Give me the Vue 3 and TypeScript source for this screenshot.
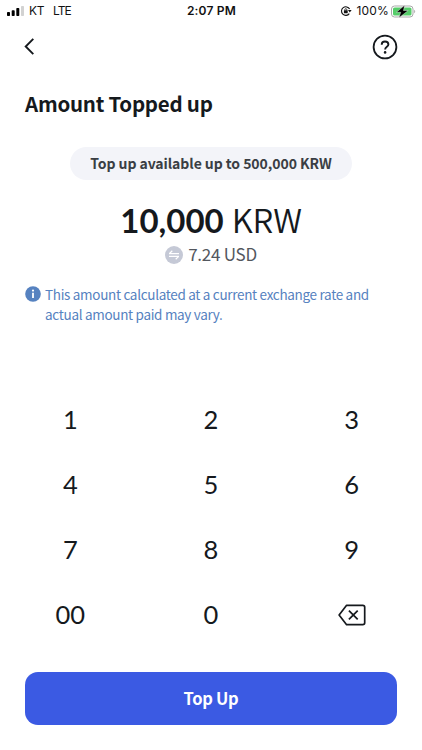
<script setup lang="ts">
import { ref } from 'vue'

const keys: string[] = ['1', '2', '3', '4', '5', '6', '7', '8', '9', '00', '0', 'del']
const amount = ref<number>(10000)
const limit = 500000
const rate = 0.000724

function format(value: number): string {
  return value.toLocaleString('en-US')
}

function press(key: string): void {
  if (key === 'del') {
    amount.value = Math.floor(amount.value / 10)
    return
  }
  const next = Number(`${amount.value}${key}`)
  if (next <= limit) amount.value = next
}
</script>

<template>
  <main class="screen">
    <div class="status">
      <div class="carrier">
        <svg class="signal" width="17" height="10" viewBox="0 0 17 10">
          <rect x="0" y="6" width="3" height="4" rx="0.8" />
          <rect x="4.7" y="4.2" width="3" height="5.8" rx="0.8" />
          <rect x="9.3" y="2" width="3" height="8" rx="0.8" />
          <rect x="14" y="0" width="3" height="10" rx="0.8" fill="#d2d2d2" />
        </svg>
        <span class="operator">KT</span>
        <span class="network">LTE</span>
      </div>
      <div class="clock">2:07 PM</div>
      <div class="power">
        <svg width="12" height="12" viewBox="0 0 12 12" fill="none" stroke="#111">
          <path d="M9.3 8.6A4.3 4.3 0 1 1 9.6 4.1" stroke-width="1.1" />
          <path d="M8 5.100h3.600L9.8 7.4z" fill="#111" stroke="none" />
          <rect x="3.900" y="5.3" width="3.8" height="3" rx="0.4" fill="#111" stroke="none" />
          <path d="M4.8 5.5V4.7a1 1 0 0 1 2 0v.8" stroke-width="0.8" />
        </svg>
        <span class="percent">100%</span>
        <svg class="battery" width="25" height="13" viewBox="0 0 25 13">
          <rect x="0.5" y="1" width="21.5" height="11" rx="3" fill="#fff" stroke="#a9a9a9" />
          <rect x="2" y="2.5" width="18.5" height="8" rx="1.6" fill="#55cd69" />
          <path d="M23.2 4.8c1.3.5 1.3 2.9 0 3.4z" fill="#a9a9a9" />
          <path d="M13.6.3 5.400 7.300h4.300l-1.700 5.500L17.200 5.500h-4.700z" fill="#000" stroke="#fff" stroke-width="0.4" />
        </svg>
      </div>
    </div>

    <header class="nav">
      <button class="icon" aria-label="Back">
        <svg width="12" height="18" viewBox="0 0 12 18" fill="none" stroke="#15191d" stroke-width="1.9">
          <path d="M10.300 .900 2.700 8.500l7.600 7.600" />
        </svg>
      </button>
      <button class="icon" aria-label="Help">
        <svg width="26" height="26" viewBox="0 0 26 26" fill="none" stroke="#15191d">
          <circle cx="13" cy="13" r="11.4" stroke-width="1.8" />
          <path d="M9.7 10.7c0-1.9 1.3-3.2 3.3-3.2s3.4 1.2 3.4 2.9c0 2.3-3.3 2.3-3.3 5" stroke-width="1.9" />
          <circle cx="13.1" cy="18.4" r="1.3" fill="#15191d" stroke="none" />
        </svg>
      </button>
    </header>

    <h1 class="title">Amount Topped up</h1>
    <div class="limit"><span>Top up available up to {{ format(limit) }} KRW</span></div>
    <div class="amount"><strong>{{ format(amount) }}</strong><span class="currency">KRW</span></div>
    <div class="converted">
      <svg width="18" height="18" viewBox="0 0 18 18">
        <circle cx="9" cy="9" r="9" fill="#c5c9d6" />
        <path d="M4 7.7h10M4 10.4h10M4.500 7.500l2.800-2.700M13.500 10.600l-2.800 2.700" fill="none" stroke="#fff" stroke-width="1.2" />
      </svg>
      <span>{{ (amount * rate).toFixed(2) }} USD</span>
    </div>
    <div class="note">
      <svg width="16" height="16" viewBox="0 0 16 16">
        <circle cx="8" cy="8" r="7.8" fill="#5682c0" />
        <circle cx="8" cy="4.6" r="1.1" fill="#fff" />
        <path d="M8 6.8v5.3" stroke="#fff" stroke-width="1.8" />
      </svg>
      <p>This amount calculated at a current exchange rate and<br />actual amount paid may vary.</p>
    </div>

    <div class="keypad">
      <button v-for="key in keys" :key="key" class="key" @click="press(key)">
        <svg v-if="key === 'del'" width="28" height="22" viewBox="0 0 28 22" fill="none" stroke="#15191d" stroke-width="1.7" stroke-linejoin="round">
          <path d="M8.600 1.300h16.200c1.200 0 1.900.7 1.900 1.900v15.600c0 1.200-.7 1.900-1.900 1.900H8.600L1.100 11z" />
          <path d="m10.900 6.600 8.800 8.800M19.700 6.600l-8.800 8.800" />
        </svg>
        <span v-else>{{ key }}</span>
      </button>
    </div>

    <button class="submit"><span>Top Up</span></button>
  </main>
</template>

<style>
body {
  background: #fff;
}
</style>

<style scoped>
.screen {
  box-sizing: border-box;
  width: 100%;
  height: 750px;
  display: flex;
  flex-direction: column;
  overflow: hidden;
  color: #15191d;
  background: #fff;
  font-family: 'Noto Sans CJK KR', sans-serif;
}
button {
  padding: 0;
  border: 0;
  background: none;
  color: inherit;
  font: inherit;
}
svg {
  display: block;
  flex: none;
}
.status {
  height: 22px;
  padding: 0 6px 0 7px;
  display: grid;
  grid-template-columns: 1fr auto 1fr;
  align-items: center;
  font: 12px/22px Inter, sans-serif;
  color: #111;
}
.carrier,
.power {
  display: flex;
  align-items: center;
}
.power {
  justify-content: flex-end;
}
.signal {
  margin-right: 5px;
}
.operator {
  letter-spacing: -0.4px;
}
.network {
  margin-left: 9px;
  letter-spacing: -0.9px;
}
.clock {
  font-weight: 600;
  letter-spacing: 0.2px;
}
.percent {
  margin: 0 2px 0 4px;
  letter-spacing: 0.2px;
}
.nav {
  height: 50px;
  padding: 0 24px 0 23px;
  display: flex;
  align-items: center;
  justify-content: space-between;
}
.title {
  margin: 15px 25px 0;
  font-size: 20.5px;
  line-height: 32px;
  font-weight: 700;
  letter-spacing: -0.25px;
}
.limit {
  margin-top: 28px;
  display: flex;
  justify-content: center;
}
.limit span {
  width: 282px;
  height: 33px;
  border-radius: 17px;
  background: #f3f4f9;
  color: #3a3e44;
  text-align: center;
  font-size: 14px;
  line-height: 32px;
  font-weight: 700;
  letter-spacing: -0.06px;
}
.amount {
  margin-top: 20px;
  height: 41px;
  display: flex;
  align-items: baseline;
  justify-content: center;
  gap: 8px;
  font-size: 33px;
  line-height: 39px;
}
.amount strong {
  font-family: Lato, sans-serif;
  line-height: 41px;
}
.currency {
  font-weight: 350;
  letter-spacing: -0.3px;
}
.converted {
  height: 27px;
  display: flex;
  align-items: center;
  justify-content: center;
  gap: 5px;
  font-size: 17px;
  line-height: 25px;
  letter-spacing: -0.25px;
  color: #53575e;
}
.converted span {
  margin-bottom: 2px;
}
.note {
  margin: 16px 25px 0;
  display: flex;
  gap: 4px;
  color: #5682c0;
  font-size: 13.5px;
  line-height: 20px;
  letter-spacing: -0.31px;
}
.note svg {
  margin-top: 2px;
}
.note p {
  margin: 0;
  white-space: nowrap;
}
.keypad {
  margin-top: 63px;
  display: grid;
  grid-template-columns: repeat(3, 1fr);
  grid-auto-rows: 65px;
}
.key {
  display: flex;
  align-items: center;
  justify-content: center;
  font-family: Lato, sans-serif;
  font-size: 25.5px;
}
.key span {
  margin-bottom: 2px;
}
.submit {
  margin: 25px 25px 0;
  padding-bottom: 2px;
  height: 53px;
  flex: none;
  border-radius: 13px;
  background: #3b5ae3;
  color: #fff;
  font-size: 16.5px;
  font-weight: 700;
  letter-spacing: -0.3px;
}
</style>
